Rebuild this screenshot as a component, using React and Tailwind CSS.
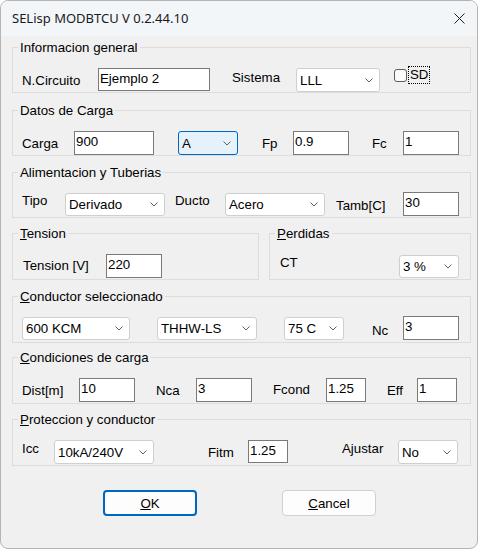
import React from "react"

function Chevron() {
  return (
    <svg width="8" height="5" viewBox="0 0 8 5" className="shrink-0">
      <path d="M0.5 0.5 L4 4 L7.5 0.5" fill="none" stroke="#5f5f5f" strokeWidth="1" />
    </svg>
  )
}

function TextBox({ value, className = "" }) {
  return (
    <div
      className={`shrink-0 border border-[#7a7a7a] bg-white pl-[1px] pt-[2px] leading-[15px] ${className}`}
    >
      {value}
    </div>
  )
}

function ComboBox({ value, focused = false, className = "" }) {
  return (
    <div
      className={`flex shrink-0 items-center justify-between rounded-[3px] border pl-[3px] pr-[6px] leading-[15px] ${
        focused ? "border-[#0067c0] bg-[#e5f1fb]" : "border-[#cfcfcf] bg-white"
      } ${className}`}
    >
      <span>{value}</span>
      <Chevron />
    </div>
  )
}

function Label({ children, className = "" }) {
  return (
    <span className={`shrink-0 whitespace-nowrap leading-[15px] ${className}`}>
      {children}
    </span>
  )
}

function Group({ title, hotkey = false, className = "", rowClassName = "", children }) {
  return (
    <fieldset className={`shrink-0 border border-[#dcdcdc] ${className}`}>
      <legend className="ml-[5px] px-[2px] leading-[15px]">
        {hotkey ? (
          <>
            <u>{title[0]}</u>
            {title.slice(1)}
          </>
        ) : (
          title
        )}
      </legend>
      <div className={`mt-[13px] flex items-start ${rowClassName}`}>{children}</div>
    </fieldset>
  )
}

export default function App() {
  return (
    <div className="min-h-screen bg-white">
      <div className="flex h-[549px] w-[478px] flex-col overflow-hidden rounded-[8px] border border-[#b4b4b4] bg-[#f0f0f0] font-['Liberation_Sans',Arial,sans-serif] text-[13.3px] text-black">
        {/* title bar */}
        <div className="flex h-[35px] shrink-0 items-center justify-between bg-[#f3f6f9] pl-[11px] pr-[12px]">
          <span className="font-['Noto_Sans',sans-serif] text-[13px] text-[#1a1a1a]">
            SELisp MODBTCU V 0.2.44.10
          </span>
          <svg width="11" height="11" viewBox="0 0 11 11">
            <path d="M0.5 0.5 L10.5 10.5 M10.5 0.5 L0.5 10.5" stroke="#1f1f1f" strokeWidth="1" />
          </svg>
        </div>

        <div className="flex flex-col pl-[11px] pt-[4px]">
          <Group title="Informacion general" className="w-[459px]" rowClassName="h-[24px]">
            <Label className="ml-[9px] w-[76px] pt-[5px]">N.Circuito</Label>
            <TextBox value="Ejemplo 2" className="h-[23px] w-[112px]" />
            <Label className="ml-[22px] w-[64px] pt-[2px]">Sistema</Label>
            <ComboBox value="LLL" className="h-[24px] w-[84px]" />
            <div className="ml-[14px] mt-[1px] h-[13px] w-[13px] shrink-0 rounded-[3px] border border-[#5c5c5c] bg-[#fbfbfb]" />
            <span className="ml-[2px] -mt-[1px] shrink-0 px-[1px] leading-[16px] outline-1 outline-dotted outline-black">
              SD
            </span>
          </Group>

          <Group title="Datos de Carga" className="mt-[10px] w-[459px]" rowClassName="h-[24px]">
            <Label className="ml-[9px] w-[52px] pt-[5px]">Carga</Label>
            <TextBox value="900" className="h-[24px] w-[80px]" />
            <ComboBox value="A" focused className="ml-[24px] h-[24px] w-[60px]" />
            <Label className="ml-[24px] w-[31px] pt-[5px]">Fp</Label>
            <TextBox value="0.9" className="h-[24px] w-[56px]" />
            <Label className="ml-[23px] w-[31px] pt-[5px]">Fc</Label>
            <TextBox value="1" className="h-[24px] w-[56px]" />
          </Group>

          <Group title="Alimentacion y Tuberias" className="mt-[9px] w-[459px]" rowClassName="h-[24px]">
            <Label className="ml-[9px] w-[43px]">Tipo</Label>
            <ComboBox value="Derivado" className="h-[23px] w-[100px]" />
            <Label className="ml-[10px] w-[50px]">Ducto</Label>
            <ComboBox value="Acero" className="h-[23px] w-[100px]" />
            <Label className="ml-[11px] w-[67px] pt-[5px]">Tamb[C]</Label>
            <TextBox value="30" className="-mt-[1px] h-[24px] w-[56px]" />
          </Group>

          <div className="mt-[8px] flex gap-[10px]">
            <Group title="Tension" hotkey className="w-[247px]" rowClassName="h-[25px]">
              <Label className="ml-[10px] w-[83px] pt-[4px]">Tension [V]</Label>
              <TextBox value="220" className="h-[24px] w-[56px]" />
            </Group>
            <Group title="Perdidas" hotkey className="w-[202px]" rowClassName="h-[25px]">
              <Label className="ml-[10px] w-[119px] pt-[1px]">CT</Label>
              <ComboBox value="3 %" className="mt-[1px] h-[23px] w-[60px]" />
            </Group>
          </div>

          <Group title="Conductor seleccionado" hotkey className="mt-[9px] w-[459px]" rowClassName="h-[25px]">
            <ComboBox value="600 KCM" className="ml-[9px] h-[23px] w-[108px]" />
            <ComboBox value="THHW-LS" className="ml-[27px] h-[23px] w-[100px]" />
            <ComboBox value="75 C" className="ml-[27px] h-[23px] w-[60px]" />
            <Label className="ml-[28px] w-[31px] pt-[6px]">Nc</Label>
            <TextBox value="3" className="-mt-[1px] h-[24px] w-[56px]" />
          </Group>

          <Group title="Condiciones de carga" hotkey className="mt-[7px] w-[459px]" rowClassName="h-[25px]">
            <Label className="ml-[9px] w-[57px] pt-[5px]">Dist[m]</Label>
            <TextBox value="10" className="h-[24px] w-[56px]" />
            <Label className="ml-[21px] w-[40px] pt-[5px]">Nca</Label>
            <TextBox value="3" className="h-[24px] w-[56px]" />
            <Label className="ml-[21px] w-[53px] pt-[4px]">Fcond</Label>
            <TextBox value="1.25" className="h-[24px] w-[40px]" />
            <Label className="ml-[21px] w-[30px] pt-[5px]">Eff</Label>
            <TextBox value="1" className="h-[24px] w-[40px]" />
          </Group>

          <Group title="Proteccion y conductor" hotkey className="mt-[8px] w-[459px]" rowClassName="h-[25px]">
            <Label className="ml-[9px] w-[32px] pt-[1px]">Icc</Label>
            <ComboBox value="10kA/240V" className="h-[24px] w-[100px]" />
            <Label className="ml-[54px] w-[40px] pt-[5px]">Fitm</Label>
            <TextBox value="1.25" className="h-[23px] w-[40px]" />
            <Label className="ml-[54px] w-[56px] pt-[1px]">Ajustar</Label>
            <ComboBox value="No" className="h-[24px] w-[60px]" />
          </Group>

          <div className="mt-[24px] flex">
            <button className="ml-[91px] h-[26px] w-[94px] rounded-[4px] border-2 border-[#0067c0] bg-[#fdfdfd] leading-[15px]">
              <u>O</u>K
            </button>
            <button className="ml-[85px] h-[26px] w-[94px] rounded-[4px] border border-[#d0d0d0] bg-[#fdfdfd] leading-[15px]">
              <u>C</u>ancel
            </button>
          </div>
        </div>
      </div>
    </div>
  )
}
